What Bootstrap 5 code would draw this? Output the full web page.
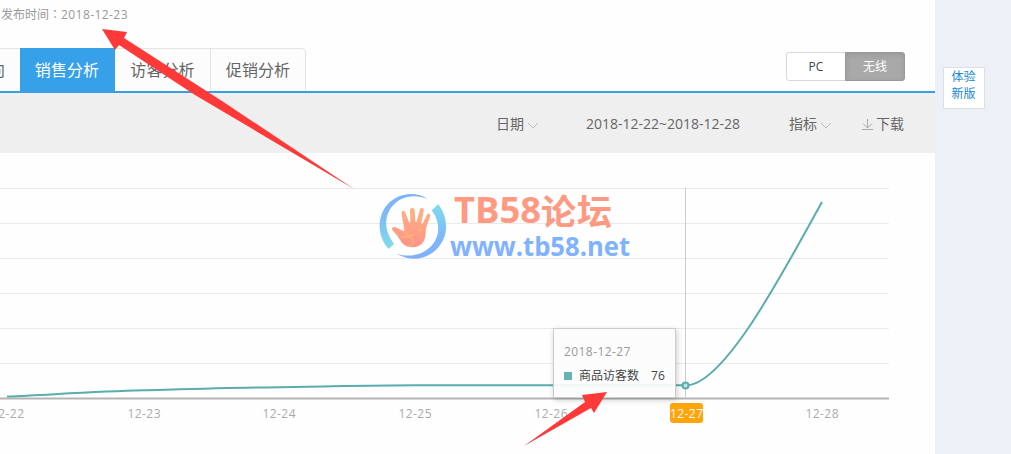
<!DOCTYPE html>
<html lang="zh-CN">
<head>
<meta charset="utf-8">
<title>销售分析</title>
<link href="https://cdn.jsdelivr.net/npm/bootstrap@5.3.0/dist/css/bootstrap.min.css" rel="stylesheet">
<style>
body{font-family:"Open Sans","Noto Sans CJK SC",sans-serif;font-size:12px;line-height:18px;background:#edf0f6;height:454px;overflow:hidden;color:#666}
.main-pane{width:935px;height:454px;background:#fefefe}
.publish{height:48px;padding:5px 0 0 1px;color:#999}
.colon{font-family:"Noto Sans CJK TC",sans-serif}
.digits{letter-spacing:.43px}
.tab-row{height:45px;border-bottom:2px solid #36a0e3}
.tab-row .nav-link{height:43px;width:95px;padding:0;line-height:42px;font-size:16px;text-align:center;color:#666;background:#fcfcfc;border:1px solid #e4e4e4;border-width:1px 1px 0 0;border-radius:0;letter-spacing:.1px}
.tab-row .nav-link.active{background:#36a0e9;color:#fff;border-color:#36a0e9}
.tab-row .nav-link.cut{width:20px;overflow:hidden;direction:rtl;padding-right:15px;border-right:0}
.tab-row .nav-link.mid{width:96px}
.tab-row .nav-link.last{width:95px;border-top-right-radius:5px}
.device{margin:4px 30px 0 0;height:29px;width:119px}
.device .btn{width:60px;padding:0;font-size:12px;line-height:27px;border:1px solid #d8d8d8;border-radius:3px;color:#444;background:#fff}
.device .btn.active{background:#a9a9a9;color:#fff;border-color:#999;box-shadow:inset 0 2px 5px #8888}
.filters{height:60px;background:#efefef;font-size:14px;line-height:20px;padding:21px 31px 0 0;color:#666}
.filters svg,.plot svg{display:block}
.filters svg{margin-top:1px}
.filters .chev{margin-top:5px}
.period{margin-left:46px;width:154px}
.metric{margin-left:49px}
.download{margin-left:27px}
.side-link{width:42px;height:42px;margin:67px 0 0 8px;border:1px solid #dcdfe4;background:#fff;color:#1688d8;line-height:17px;padding-right:1px;text-align:center;text-decoration:none}
.plot{height:301px}
.tip{left:553px;top:175px;width:123px;height:70px;padding:14px 10px 0;background:rgba(252,252,252,.92);border:1px solid #ccc;box-shadow:1px 2px 6px rgba(0,0,0,.2);color:#999}
.tip .series{color:#444;margin-top:6px}
.swatch{width:8px;height:8px;background:#65b3b4;margin-right:7px}
.marks{left:0;top:0;pointer-events:none}
svg text{font-family:"Open Sans","Noto Sans CJK SC",sans-serif}
</style>
</head>
<body class="d-flex position-relative">
<main class="main-pane flex-shrink-0">
  <div class="publish">发布时间<span class="colon" lang="zh-TW">：</span><span class="digits">2018-12-23</span></div>
  <div class="tab-row d-flex justify-content-between">
    <nav class="nav flex-nowrap">
      <a class="nav-link cut" href="#">向</a>
      <a class="nav-link active" href="#">销售分析</a>
      <a class="nav-link mid" href="#">访客分析</a>
      <a class="nav-link last" href="#">促销分析</a>
    </nav>
    <div class="btn-group device"><button class="btn">PC</button><button class="btn active">无线</button></div>
  </div>
  <div class="filters d-flex justify-content-end">
    <span class="d-flex">日期<svg class="chev" width="16" height="12" fill="none" stroke="#bbb"><path d="M4 4l5 5 5-5"/></svg></span>
    <span class="period text-nowrap">2018-12-22~2018-12-28</span>
    <span class="metric d-flex">指标<svg class="chev" width="16" height="12" fill="none" stroke="#bbb"><path d="M4 4l5 5 5-5"/></svg></span>
    <span class="download d-flex"><svg width="16" height="20" fill="none" stroke="#aaa"><path d="M7.500 4v9M3 8.500l4.500 4.500 4.500-4.500M2 14.500h11"/></svg>下载</span>
  </div>
  <div class="plot position-relative">
    <svg width="935" height="301" viewBox="0 153 935 301">
      <path d="M0 188.500h889M0 223.500h889M0 258.500h889M0 293.500h889M0 328.500h889M0 363.500h889" stroke="#ebebeb"/>
      <path d="M0 398.500h889" stroke="#b4b4b4" stroke-width="2"/>
      <path d="M685.500 188v210" stroke="#ccc"/>
      <path d="M7 396.500C52 394.500 98 391.500 143 390.300S234 387.700 279 387.200S370 385.300 415 385.300H686C722 385.300 776 286 822 202" fill="none" stroke="#5aadad" stroke-width="2"/>
      <circle cx="685.500" cy="385.500" r="3" fill="#c4e2e2" stroke="#5aadad" stroke-width="2"/>
      <rect x="670" y="403" width="33" height="20" rx="3" fill="#ffa50b"/>
      <g font-size="12" fill="#aaa">
        <text x="-9" y="418" textLength="33">12-22</text><text x="127.500" y="418" textLength="33">12-23</text><text x="262.500" y="418" textLength="33">12-24</text><text x="398.500" y="418" textLength="33">12-25</text><text x="534.500" y="418" textLength="33">12-26</text><text x="670" y="418" textLength="33" fill="#fff">12-27</text><text x="805.500" y="418" textLength="33">12-28</text>
      </g>
    </svg>
    <div class="tip position-absolute">
      <div class="digits">2018-12-27</div>
      <div class="series d-flex align-items-center"><i class="swatch"></i>商品访客数<span style="margin-left:12px">76</span></div>
    </div>
  </div>
</main>
<aside><a class="side-link d-block" href="#">体验<br>新版</a></aside>
<svg class="marks position-absolute" width="1011" height="454">
  <defs>
    <linearGradient id="ringA" x1="0" y1="0" x2="0" y2="1"><stop offset="0" stop-color="#7bb0fc"/><stop offset=".4" stop-color="#7ebcf7"/><stop offset="1" stop-color="#80dce9"/></linearGradient>
    <linearGradient id="ringB" x1="0" y1="0" x2="0" y2="1"><stop offset="0" stop-color="#80dce9"/><stop offset=".6" stop-color="#7db8fb"/><stop offset="1" stop-color="#80b0ff"/></linearGradient>
    <linearGradient id="palm" x1="0" y1="0" x2="0" y2="1"><stop offset="0" stop-color="#ffb183"/><stop offset="1" stop-color="#ff9387"/></linearGradient>
  </defs>
  <g transform="translate(376 190) scale(.3333)">
    <path d="M156 27C118 3 68 8 35 43C3 78 2 138 38 177L54 162C28 128 22 88 44 55C70 18 112 11 156 27Z" fill="url(#ringA)"/>
    <path d="M187 43C217 82 219 137 186 173C154 210 103 216 62 191C101 204 145 195 171 162C194 132 191 91 167 61Z" fill="url(#ringB)"/>
    <path d="M49 113C56 106 68 118 85 124C87 118 75 75 77 66C79 60 86 62 88 68L99 96C100 99 103 98 103 94L102 61C103 52 114 52 116 60L118 94C119 97 121 97 122 94L132 58C136 50 145 54 143 63L136 99C136 103 139 103 141 99L153 74C157 67 165 72 162 80C154 104 149 112 149 130C148 158 131 173 109 172C82 171 76 155 66 140C58 128 44 120 49 113Z" fill="url(#palm)"/>
    <path d="M75 143C91 137 108 142 112 151C115 160 107 170 96 168M89 132C96 139 112 139 118 130M124 119C130 124 137 119 142 115M109 71v12M136 77l-3 12" fill="none" stroke="#ffc16c" stroke-width="3"/>
  </g>
  <text x="454" y="223" font-size="36" font-weight="700" fill="#ff9982" textLength="87" lengthAdjust="spacingAndGlyphs">TB58</text>
  <text x="541" y="225" font-size="35" font-weight="700" fill="#ff9982" textLength="71">论坛</text>
  <text x="450" y="256" font-size="27" font-weight="700" fill="#80b2ff" textLength="180" lengthAdjust="spacingAndGlyphs">www.tb58.net</text>
  <path d="M102 29L127 32L124 38L225 103L354 189L195 95L119 45L115 50Z" fill="#ff3838"/>
  <path d="M524 446L585 402L582 395L607 392L594 413L591 408Z" fill="#ff3838"/>
</svg>
<script src="https://cdn.jsdelivr.net/npm/bootstrap@5.3.0/dist/js/bootstrap.bundle.min.js"></script>
</body>
</html>
